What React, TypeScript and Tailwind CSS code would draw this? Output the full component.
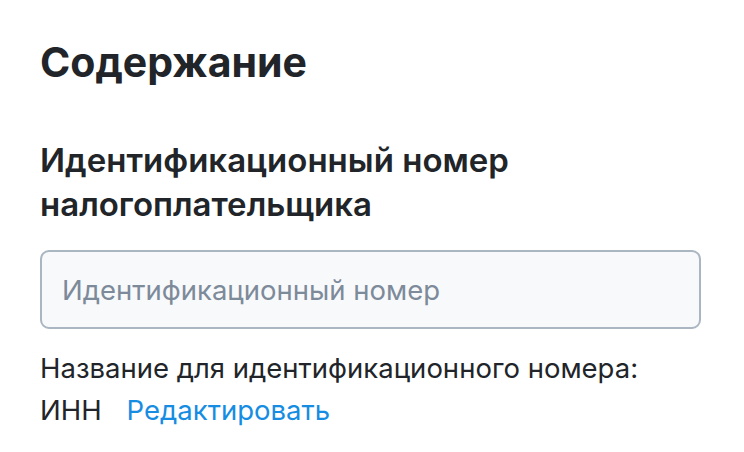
import React from "react";

export default function App() {
  return (
    <div className="w-[744px] h-[452px] bg-white pl-10 pr-[43px] pt-[38px] overflow-hidden text-[#212529]">
      <h1 className="font-['Inter',sans-serif] text-[41px] leading-[48px] font-bold">
        Содержание
      </h1>
      <h2 className="mt-[52px] font-['Inter',sans-serif] text-[33px] leading-[44px] font-semibold">
        Идентификационный номер налогоплательщика
      </h2>
      <input
        type="text"
        placeholder="Идентификационный номер"
        className="mt-6 block w-full h-[79px] border-2 border-[#aab6c2] rounded-[9px] bg-[#f8f9fa] px-5 font-['Inter',sans-serif] text-[27.5px] text-[#212529] placeholder:text-[#7d8a9a] outline-none"
      />
      <div className="mt-[18px] font-['Inter',sans-serif] text-[27.5px] leading-[42px]">
        <p>Название для идентификационного номера:</p>
        <p className="flex items-baseline">
          <span>ИНН</span>
          <a href="#" className="ml-[25px] text-[#168de2]">Редактировать</a>
        </p>
      </div>
    </div>
  );
}
